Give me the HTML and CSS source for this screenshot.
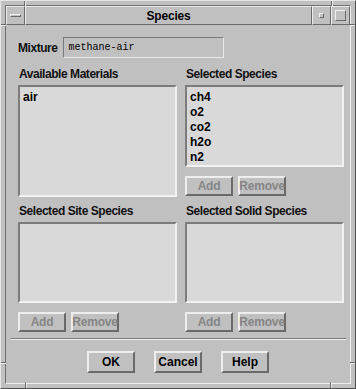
FILE: index.html
```html
<!DOCTYPE html>
<html>

<head>
    <title>Species</title>
    <link rel="stylesheet" href="styles.css">
</head>

<body>
    <div class="window">
        <span class="notch top n-left"></span>
        <span class="notch top n-right"></span>
        <span class="notch bottom n-left2"></span>
        <span class="notch bottom n-right2"></span>
        <span class="notch side left n-upper"></span>
        <span class="notch side left n-lower"></span>
        <span class="notch side right n-upper"></span>
        <span class="notch side right n-lower"></span>

        <div class="frame">
            <div class="titlebar">
                <div class="tb menu"><div class="menuBar"></div></div>
                <div class="tb title">Species</div>
                <div class="tb min"><div class="minBox"></div></div>
                <div class="tb max"><div class="maxBox"></div></div>
            </div>

            <div class="dialog">
                <div class="form">
                    <div class="mixture">
                        <span class="label">Mixture</span>
                        <div class="textbox">methane-air</div>
                    </div>

                    <div class="columnas">
                        <div class="celda">
                            <div class="label">Available Materials</div>
                            <div class="lista alta">
                                <p>air</p>
                            </div>
                        </div>
                        <div class="celda">
                            <div class="label">Selected Species</div>
                            <div class="lista media">
                                <p>ch4</p>
                                <p>o2</p>
                                <p>co2</p>
                                <p>h2o</p>
                                <p>n2</p>
                            </div>
                            <div class="botones">
                                <div class="boton off">Add</div>
                                <div class="boton off">Remove</div>
                            </div>
                        </div>
                        <div class="celda">
                            <div class="label">Selected Site Species</div>
                            <div class="lista baja"></div>
                            <div class="botones">
                                <div class="boton off">Add</div>
                                <div class="boton off">Remove</div>
                            </div>
                        </div>
                        <div class="celda">
                            <div class="label">Selected Solid Species</div>
                            <div class="lista baja"></div>
                            <div class="botones">
                                <div class="boton off">Add</div>
                                <div class="boton off">Remove</div>
                            </div>
                        </div>
                    </div>
                </div>

                <div class="separador"></div>

                <div class="acciones">
                    <div class="boton grande">OK</div>
                    <div class="boton grande">Cancel</div>
                    <div class="boton grande">Help</div>
                </div>
            </div>
        </div>
    </div>
</body>

</html>
```

FILE: styles.css
```css
body {
    margin: 0;
    background-color: #c0c0c0;
    font-family: "Liberation Sans", Arial, sans-serif;
}

.window {
    position: relative;
    width: 356px;
    height: 389px;
    box-sizing: border-box;
    border: 1px solid;
    border-color: #e6e6e6 #505050 #505050 #e6e6e6;
    padding: 4px;
    background-color: #c0c0c0;
}

/* marcas de las esquinas del marco */
.notch {
    position: absolute;
    box-sizing: border-box;
}

.notch.top,
.notch.bottom {
    width: 2px;
    height: 5px;
    border-left: 1px solid #6a6a6a;
    border-right: 1px solid #ececec;
}

.notch.top {
    top: 0;
}

.notch.bottom {
    bottom: 0;
    height: 6px;
}

.n-left {
    left: 23px;
}

.n-right {
    left: 330px;
}

.n-left2 {
    left: 24px;
}

.n-right2 {
    left: 329px;
}

.notch.side {
    width: 5px;
    height: 2px;
    border-top: 1px solid #6a6a6a;
    border-bottom: 1px solid #ececec;
}

.notch.left {
    left: 0;
}

.notch.right {
    right: 0;
}

.n-upper {
    top: 23px;
}

.n-lower {
    top: 361px;
}

.frame {
    height: 100%;
    box-sizing: border-box;
    border: 1px solid;
    border-color: #707070 #eeeeee #eeeeee #707070;
    display: flex;
    flex-direction: column;
}

.titlebar {
    display: flex;
    flex-direction: row;
    height: 19px;
}

.tb {
    box-sizing: border-box;
    height: 19px;
    border: 1px solid;
    border-color: #ececec #6a6a6a #6a6a6a #ececec;
    display: flex;
    justify-content: center;
    align-items: center;
}

.menu,
.min,
.max {
    width: 19px;
}

.title {
    flex: 1;
    font-weight: bold;
    font-size: 12px;
    letter-spacing: -0.2px;
    color: #000;
}

.menuBar {
    width: 11px;
    height: 3px;
    box-sizing: border-box;
    border: 1px solid;
    border-color: #f0f0f0 #6a6a6a #6a6a6a #f0f0f0;
}

.minBox {
    width: 5px;
    height: 5px;
    box-sizing: border-box;
    border: 1px solid;
    border-color: #f0f0f0 #6a6a6a #6a6a6a #f0f0f0;
}

.maxBox {
    width: 11px;
    height: 11px;
    box-sizing: border-box;
    border: 1px solid;
    border-color: #f0f0f0 #6a6a6a #6a6a6a #f0f0f0;
}

.dialog {
    flex: 1;
    display: flex;
    flex-direction: column;
}

.form {
    padding: 12px 6px 0 12px;
}

.label {
    font-weight: bold;
    font-size: 12px;
    letter-spacing: -0.45px;
    line-height: 16px;
    color: #111;
}

.mixture {
    display: flex;
    flex-direction: row;
    align-items: center;
    height: 21px;
}

.mixture .label {
    margin-right: 5px;
}

.textbox {
    width: 161px;
    height: 21px;
    box-sizing: border-box;
    border: 1px solid;
    border-color: #7a7a7a #e8e8e8 #e8e8e8 #7a7a7a;
    padding-left: 5px;
    font-family: "Liberation Mono", monospace;
    font-size: 10px;
    line-height: 19px;
    color: #000;
}

.columnas {
    margin-top: 8px;
    display: grid;
    grid-template-columns: 159px 159px;
    column-gap: 8px;
    row-gap: 6px;
}

.celda {
    display: flex;
    flex-direction: column;
}

.celda .label {
    margin-bottom: 3px;
    padding-left: 1px;
}

.lista {
    box-sizing: border-box;
    border: 2px solid;
    border-color: #7c7c7c #f2f2f2 #f2f2f2 #7c7c7c;
    background-color: #d9d9d9;
    padding: 3px 3px;
}

.lista p {
    margin: 0;
    font-weight: bold;
    font-size: 12px;
    line-height: 15px;
    color: #000;
}

.alta {
    height: 112px;
}

.media {
    height: 82px;
}

.baja {
    height: 81px;
}

.botones {
    display: flex;
    flex-direction: row;
    gap: 5px;
    margin-top: 9px;
}

.boton {
    box-sizing: border-box;
    width: 48px;
    height: 20px;
    border: 2px solid;
    border-color: #eeeeee #6a6a6a #6a6a6a #eeeeee;
    display: flex;
    justify-content: center;
    align-items: center;
    font-weight: bold;
    font-size: 12px;
    color: #000;
}

.off {
    color: #858585;
    letter-spacing: -0.2px;
}

.separador {
    margin: 6px 4px 0 5px;
    height: 0;
    border-top: 1px solid #7a7a7a;
    border-bottom: 1px solid #eeeeee;
}

.acciones {
    display: flex;
    flex-direction: row;
    justify-content: center;
    gap: 19px;
    margin-top: 11px;
}

.grande {
    height: 22px;
}
```
